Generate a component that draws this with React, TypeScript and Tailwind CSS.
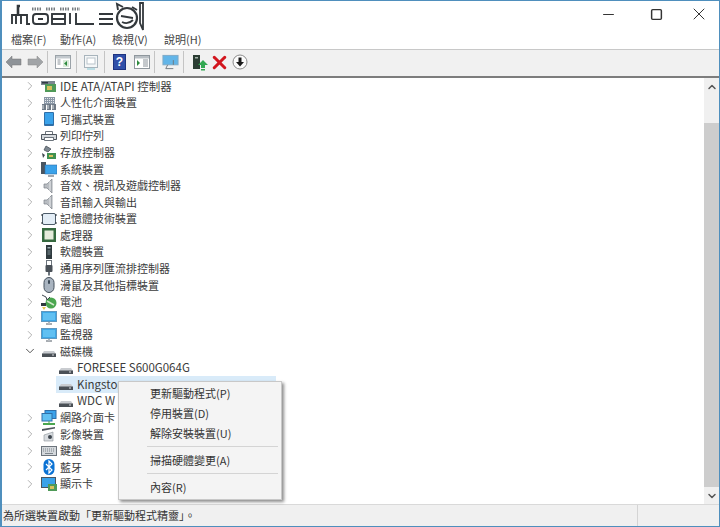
import type { ReactNode } from "react";
import { ChevronDown, ChevronRight, ChevronUp, Minus, Square, X } from "lucide-react";

const cjk = "font-['Noto_Sans_CJK_TC','Noto_Sans',sans-serif]";

function Svg({ children }: { children: ReactNode }) {
  return (
    <svg width="16" height="16" viewBox="0 0 16 16" className="shrink-0">
      {children}
    </svg>
  );
}

const Disk = () => (
  <Svg>
    <path d="M3 8h10l2 3v3H1v-3z" fill="#c9ccd0" />
    <rect x="1" y="10.5" width="14" height="3.5" fill="#4a5056" />
    <rect x="11" y="11.5" width="2" height="1" fill="#d8dadd" />
  </Svg>
);

const Speaker = () => (
  <Svg>
    <path d="M3 6h3l5-5v14l-5-5H3z" fill="#b9bdc2" stroke="#7d8289" strokeWidth="0.7" />
    <path d="M9 3v10" stroke="#e6e8ea" />
  </Svg>
);

const Monitor = () => (
  <Svg>
    <rect x="0.5" y="1.5" width="15" height="10" fill="#3da7e6" stroke="#5f98c0" />
    <rect x="2" y="3" width="12" height="7" fill="#61c0f2" />
    <path d="M5 14h6" stroke="#8b9299" strokeWidth="1.5" />
    <path d="M7 12h2v2H7z" fill="#b5bac0" />
  </Svg>
);

const icons: Record<string, ReactNode> = {
  ide: (
    <Svg>
      <rect x="0" y="3" width="14" height="4" fill="#7d8790" />
      <rect x="4" y="6" width="11" height="8" fill="#4f9a58" />
      <rect x="6" y="8" width="5" height="4" fill="#d7c05c" />
      <rect x="1" y="4" width="6" height="1.5" fill="#2f3a44" />
    </Svg>
  ),
  hid: (
    <Svg>
      <path d="M3 2h11v8H3z" fill="#8a97a6" />
      <path d="M4 3.5h9M4 5.5h9M4 7.5h9" stroke="#e4e8ec" strokeDasharray="1 1" />
      <path d="M1 9h4v6H1zM6 9h4v6H6zM11 9h4v6h-4z" fill="#6f7a86" />
      <path d="M2 10v4M7 10v4M12 10v4" stroke="#dfe3e7" />
    </Svg>
  ),
  portable: (
    <Svg>
      <rect x="3" y="1" width="10" height="14" rx="1" fill="#2f6fa8" />
      <rect x="4" y="2" width="8" height="11" fill="#3aa2ea" />
    </Svg>
  ),
  printer: (
    <Svg>
      <path d="M4.500 3.500h7v3h-7z" fill="#fff" stroke="#6c747c" />
      <path d="M0.500 6.500h15v5h-3V9.500h-9v2h-3z" fill="#d4d8dc" stroke="#4d555d" />
      <path d="M3.500 9.500h9v3h-9z" fill="#fff" stroke="#6c747c" />
    </Svg>
  ),
  storage: (
    <Svg>
      <path d="M5 1l5 3-3 3-4-2z" fill="#7d8790" stroke="#3e464e" strokeWidth="0.7" />
      <path d="M1 8l3 2-2 3z" fill="#3e464e" />
      <rect x="6" y="8" width="9" height="6" fill="#3f9150" />
      <rect x="8" y="10" width="4" height="2" fill="#d7c05c" />
    </Svg>
  ),
  system: (
    <Svg>
      <rect x="0" y="1" width="5" height="12" fill="#4a5560" />
      <rect x="4" y="4" width="12" height="9" fill="#3aa2ea" stroke="#2f6fa8" strokeWidth="0.6" />
      <path d="M7 15h6" stroke="#79828b" strokeWidth="1.4" />
    </Svg>
  ),
  speaker: <Speaker />,
  memory: (
    <Svg>
      <rect x="1.5" y="2.5" width="13" height="11" rx="1.5" fill="#e3edf6" stroke="#4d5c6a" />
      <path d="M0 4h2M0 12h2M14 4h2M14 12h2" stroke="#2b3338" />
    </Svg>
  ),
  cpu: (
    <Svg>
      <rect x="1" y="1" width="14" height="14" fill="#35693f" />
      <rect x="3.5" y="3.5" width="9" height="9" fill="#e6ebdc" />
    </Svg>
  ),
  software: (
    <Svg>
      <rect x="5" y="1" width="6" height="14" fill="#2f3a3e" />
      <rect x="6.5" y="3" width="3" height="1.5" fill="#9fb0b5" />
      <rect x="6.5" y="6" width="3" height="5" fill="#56656a" />
    </Svg>
  ),
  usb: (
    <Svg>
      <rect x="5.5" y="0.5" width="5" height="5" fill="#fff" stroke="#6c747c" />
      <rect x="4.5" y="5" width="7" height="7" rx="1" fill="#4a5158" />
      <rect x="7" y="12" width="2" height="3.5" fill="#6c747c" />
    </Svg>
  ),
  mouse: (
    <Svg>
      <rect x="3" y="0.5" width="10" height="15" rx="5" fill="#a9b4c0" stroke="#45505c" />
      <rect x="7" y="3" width="2" height="4" rx="1" fill="#3d4a57" />
    </Svg>
  ),
  battery: (
    <Svg>
      <circle cx="10" cy="9" r="5.5" fill="#4aa64f" />
      <path d="M6 7l7 4" stroke="#cfe8c8" strokeWidth="1.5" />
      <path d="M1 1l4 2 1 3 3-3" stroke="#3e464e" fill="none" />
      <path d="M0 9h5v3H0z" fill="#2f3a3e" />
      <path d="M1 13h4l-2 3z" fill="#e6c84e" />
    </Svg>
  ),
  monitor: <Monitor />,
  disk: <Disk />,
  network: (
    <Svg>
      <rect x="4" y="0.5" width="11" height="8" fill="#3aa2ea" stroke="#2f6fa8" />
      <rect x="1" y="3.5" width="10" height="7.5" fill="#61c0f2" stroke="#2f6fa8" />
      <path d="M2 14h12" stroke="#4aa64f" strokeWidth="2" />
      <path d="M8 11v3" stroke="#4aa64f" />
    </Svg>
  ),
  camera: (
    <Svg>
      <path d="M1 3l13-2v1.5L1 5z" fill="#4d555d" />
      <path d="M3 9l9-3v9H3z" fill="#d8dce0" stroke="#8a9299" strokeWidth="0.6" />
      <circle cx="9" cy="11" r="2" fill="#3e464e" />
    </Svg>
  ),
  keyboard: (
    <Svg>
      <rect x="0.5" y="3.5" width="15" height="9" fill="#d4d8dc" stroke="#6c747c" />
      <path d="M2 6h12M2 8h12" stroke="#7d858c" strokeDasharray="1 1" />
      <path d="M4 10.5h8" stroke="#7d858c" />
    </Svg>
  ),
  bluetooth: (
    <Svg>
      <rect x="2.5" y="0" width="11" height="16" rx="5.5" fill="#0a72d4" />
      <path d="M5 5l6 6-3 3V2l3 3-6 6" stroke="#fff" strokeWidth="1.2" fill="none" />
    </Svg>
  ),
  display: (
    <Svg>
      <rect x="0.5" y="1.5" width="14" height="10" fill="#3aa2ea" stroke="#4a5560" />
      <rect x="7" y="8" width="9" height="7" fill="#4f9a58" />
      <rect x="9" y="10" width="4" height="3" fill="#d7c05c" />
    </Svg>
  ),
};

type Row = { label: string; icon: string; level?: number; open?: boolean; selected?: boolean; latin?: boolean };

const rows: Row[] = [
  { label: "IDE ATA/ATAPI 控制器", icon: "ide", latin: true },
  { label: "人性化介面裝置", icon: "hid" },
  { label: "可攜式裝置", icon: "portable" },
  { label: "列印佇列", icon: "printer" },
  { label: "存放控制器", icon: "storage" },
  { label: "系統裝置", icon: "system" },
  { label: "音效、視訊及遊戲控制器", icon: "speaker" },
  { label: "音訊輸入與輸出", icon: "speaker" },
  { label: "記憶體技術裝置", icon: "memory" },
  { label: "處理器", icon: "cpu" },
  { label: "軟體裝置", icon: "software" },
  { label: "通用序列匯流排控制器", icon: "usb" },
  { label: "滑鼠及其他指標裝置", icon: "mouse" },
  { label: "電池", icon: "battery" },
  { label: "電腦", icon: "monitor" },
  { label: "監視器", icon: "monitor" },
  { label: "磁碟機", icon: "disk", open: true },
  { label: "FORESEE S600G064G", icon: "disk", level: 1, latin: true },
  { label: "Kingston", icon: "disk", level: 1, selected: true, latin: true },
  { label: "WDC W", icon: "disk", level: 1, latin: true },
  { label: "網路介面卡", icon: "network" },
  { label: "影像裝置", icon: "camera" },
  { label: "鍵盤", icon: "keyboard" },
  { label: "藍牙", icon: "bluetooth" },
  { label: "顯示卡", icon: "display" },
];

function Logo() {
  return (
    <svg width="146" height="31" viewBox="0 0 146 31" className="block">
      <g fill="none" stroke="#33383c" strokeWidth="1.900">
        <path d="M10 23v-9h4v9M14 14h5v9M19 14h6v9h3" />
        <path d="M16 14V5h2" strokeWidth="2.600" />
        <rect x="31" y="13" width="15" height="10" rx="3" />
        <rect x="50" y="13" width="13" height="10" />
        <path d="M50 18h13M68 12v11M74 12v11h18M97 13h14M97 18h14M97 23h14" />
        <circle cx="125" cy="17" r="10" strokeWidth="2.200" />
        <path d="M116 9l-1-6 6 3M130 6l5 3M119 15l12 2M120 21q6 3 11-2" />
        <path d="M138 2h3v27l-3-7z" strokeWidth="1.800" />
      </g>
      <rect x="36" y="17" width="5" height="2" fill="#33383c" />
      <path d="M30 8h10M44 8h10M58 8h10M70 8h8" stroke="#777c80" strokeWidth="3" strokeDasharray="1.500 1" />
    </svg>
  );
}

function Sep({ className }: { className: string }) {
  return <div className={`w-px h-[22px] bg-[#c4c4c4] ${className}`} />;
}

function Toolbar() {
  return (
    <div className="h-[27px] flex items-center pl-[3px] pb-[2px] border-t border-[#c8c8c8] bg-[#f1f1f1]">
      <svg width="38" height="16" viewBox="0 0 38 16">
        <path d="M1 8l6-6v3h9v6H7v3z" fill="#8e9398" stroke="#777" strokeWidth="0.5" />
        <path d="M38 8l-6-6v3h-9v6h9v3z" fill="#a1a4a7" stroke="#8a8a8a" strokeWidth="0.5" />
      </svg>
      <Sep className="ml-[4px]" />
      <svg width="16" height="14" viewBox="0 0 16 14" className="ml-[7px]">
        <rect x="0.5" y="0.5" width="15" height="13" fill="#fff" stroke="#9aa2a8" />
        <rect x="1" y="1" width="14" height="2.5" fill="#c3c9ce" />
        <rect x="8" y="5" width="6" height="7" fill="#d9ead9" />
        <path d="M12 6v5l-3-2.500z" fill="#2d8a3d" />
        <path d="M2.500 5h3M2.500 7h3M2.500 9h3" stroke="#8a9299" />
      </svg>
      <Sep className="ml-[5px]" />
      <svg width="16" height="16" viewBox="0 0 16 16" className="ml-[6px]">
        <rect x="1.500" y="1.500" width="13" height="12" fill="#f5f7f8" stroke="#a8b4bc" />
        <rect x="4" y="4" width="8" height="6" fill="#fff" stroke="#b9c3ca" />
        <path d="M4 15h8" stroke="#a9d6df" strokeWidth="1.5" />
      </svg>
      <Sep className="ml-[5px]" />
      <div className="ml-[8px] w-[13px] h-[16px] flex items-center justify-center bg-[#2f4fa8] border border-[#1d3380] text-white text-[12px] leading-none font-bold font-['Liberation_Sans',sans-serif]">
        ?
      </div>
      <svg width="16" height="14" viewBox="0 0 16 14" className="ml-[8px]">
        <rect x="0.500" y="0.500" width="15" height="13" fill="#fff" stroke="#8f979d" />
        <rect x="1" y="1" width="14" height="2.500" fill="#b9bfc4" />
        <path d="M3 5v6l3-3z" fill="#2d8a3d" />
        <path d="M9 5h5M9 7h5M9 9h5M9 11h5" stroke="#8a9299" />
      </svg>
      <Sep className="ml-[4px]" />
      <svg width="17" height="16" viewBox="0 0 18 16" className="ml-[7px]">
        <rect x="1" y="1" width="16" height="10" fill="#62b5e8" stroke="#7fa9c6" />
        <path d="M6 11l-2 4M4 15h8M12 11v-5" stroke="#6f7880" />
      </svg>
      <Sep className="ml-[4px]" />
      <svg width="16" height="17" viewBox="0 0 16 17" className="ml-[8px]">
        <rect x="1" y="1" width="7" height="14" fill="#2b3d33" />
        <rect x="3" y="3" width="3" height="1.500" fill="#a6b4ac" />
        <path d="M11 6l5 5h-3v3h-4v-3H6z" fill="#32a852" />
        <rect x="9" y="15" width="4" height="1.500" fill="#32a852" />
      </svg>
      <X size={21} strokeWidth={3.5} className="text-[#d2161e] ml-[1px]" />
      <svg width="16" height="16" viewBox="0 0 16 16" className="ml-[2px]">
        <circle cx="8" cy="8" r="7" fill="#fbfbfb" stroke="#8b8b8b" />
        <path d="M6.500 3.500h3V8H12l-4 4.500L4 8h2.500z" fill="#1b1b1b" />
      </svg>
    </div>
  );
}

function TreeRow({ row }: { row: Row }) {
  const indent = row.level ? "pl-[56px]" : "pl-[39px]";
  const size = row.latin ? "text-[11.5px]" : "text-[11px]";
  return (
    <div className={`relative h-[16.57px] flex items-center ${indent}`}>
      {row.selected && <div className="absolute left-[54px] top-0 w-[220px] h-full bg-[#d9ebf9]" />}
      {!row.level && (
        <div className="absolute left-[21px] top-0 h-full flex items-center">
          {row.open ? (
            <ChevronDown size={14} strokeWidth={1.5} className="text-[#3f3f3f]" />
          ) : (
            <ChevronRight size={14} strokeWidth={1.5} className="text-[#a6a6a6]" />
          )}
        </div>
      )}
      <div className="relative flex items-center gap-[3px]">
        {icons[row.icon]}
        <span className={`${size} leading-none whitespace-nowrap text-[#3b3b3b]`}>{row.label}</span>
      </div>
    </div>
  );
}

function ContextMenu() {
  const item = "h-[20px] flex items-center pl-[31px]";
  return (
    <div className="absolute left-[116px] top-[303px] w-[164px] h-[119px] pt-[1px] bg-[#f4f4f4] border border-[#c8c8c8] shadow-[2px_2px_3px_rgba(0,0,0,0.45)] text-[11px] text-[#333]">
      <div className={item}>更新驅動程式(P)</div>
      <div className={item}>停用裝置(D)</div>
      <div className={item}>解除安裝裝置(U)</div>
      <div className="h-px ml-[28px] mr-[3px] my-[3px] bg-[#d4d4d4]" />
      <div className={item}>掃描硬體變更(A)</div>
      <div className="h-px ml-[28px] mr-[3px] my-[3px] bg-[#d4d4d4]" />
      <div className={item}>內容(R)</div>
    </div>
  );
}

export default function App() {
  return (
    <div className={`${cjk} w-[720px] h-[527px] flex flex-col overflow-hidden bg-white border-l-2 border-r border-t border-b border-[#4f8fbd] text-[#333]`}>
      <div className="h-[28px] flex justify-between">
        <Logo />
        <div className="flex items-center h-[26px] text-[#333]">
          <Minus size={17} strokeWidth={1.4} className="mr-[33px]" />
          <Square size={13} strokeWidth={2.700} className="mr-[26px]" />
          <X size={20} strokeWidth={1.200} className="mr-[10px]" />
        </div>
      </div>
      <div className="h-[20px] flex items-center pl-[9px] text-[11px] text-[#444]">
        <span className="w-[49px]">檔案(F)</span>
        <span className="w-[52px]">動作(A)</span>
        <span className="w-[52px]">檢視(V)</span>
        <span>說明(H)</span>
      </div>
      <Toolbar />
      <div className="relative flex-1 flex border-t-2 border-[#7d7d7d] border-b border-b-[#d9d9d9] min-h-0">
        <div className="flex-1">
          {rows.map((row) => (
            <TreeRow key={row.label} row={row} />
          ))}
        </div>
        <div className="w-[15px] flex flex-col bg-[#f0f0f0]">
          <div className="h-[17px] flex items-center justify-center">
            <ChevronUp size={12} strokeWidth={3} className="text-[#555]" />
          </div>
          <div className="mt-[28px] flex-1 bg-[#cdcdcd]" />
          <div className="h-[17px] flex items-center justify-center">
            <ChevronDown size={12} strokeWidth={3} className="text-[#555]" />
          </div>
        </div>
        <ContextMenu />
      </div>
      <div className="h-[21px] flex bg-[#f0f0f0] text-[11px] text-[#333]">
        <div className="w-[636px] flex items-center pl-[1px] border-r border-[#d4d4d4]">
          為所選裝置啟動「更新驅動程式精靈」。
        </div>
        <div className="flex-1" />
      </div>
    </div>
  );
}
